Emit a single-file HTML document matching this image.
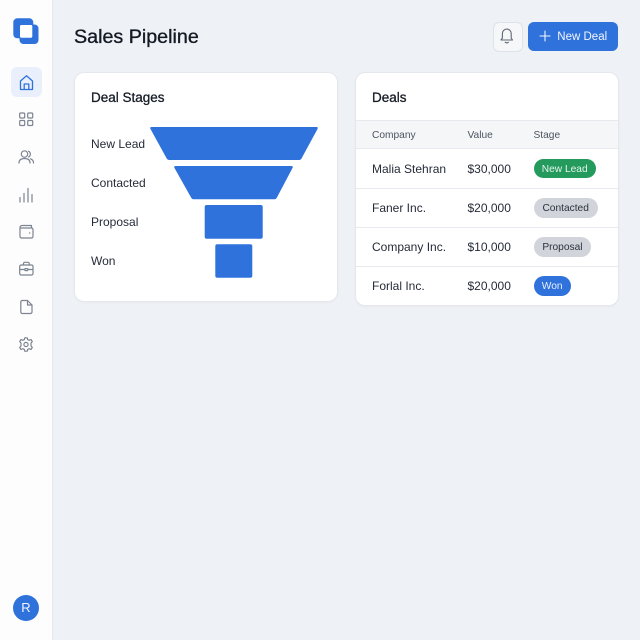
<!DOCTYPE html>
<html>
<head>
<meta charset="utf-8">
<style>
html,body{margin:0;padding:0;width:640px;height:640px;overflow:hidden}
body{background:#eef1f5;font-family:"Liberation Sans",sans-serif;color:#1f2733;position:relative}
.a{position:absolute;white-space:nowrap}
#side{left:0;top:0;width:52px;height:640px;background:#fdfdfe;border-right:1.5px solid #e4e7ec}
.card{background:#fff;border-radius:9px;box-shadow:0 0 0 1px #e4e7ec,0 1px 3px rgba(30,40,60,.06)}
.t{font-size:12px;line-height:16px;color:#252c38}
.l{font-size:12px;line-height:16px;color:#252c38}
.h{font-size:13.5px;line-height:18px;color:#161c26;-webkit-text-stroke:.3px #161c26}
.th{font-size:10.2px;line-height:14px;color:#4b5461}
.pill{height:19.6px;line-height:21.5px;border-radius:10px;font-size:10.2px;text-align:center}
.line{left:355.5px;width:262.5px;height:1px;background:#e6e9ee}
svg{position:absolute;left:0;top:0}
</style>
</head>
<body>
<div class="a" id="side"></div>
<div class="a" style="left:11px;top:67px;width:31px;height:30px;border-radius:6px;background:#e9f0fb"></div>

<div class="a" style="left:74px;top:23.5px;font-size:19.7px;line-height:26px;color:#141a24;-webkit-text-stroke:.35px #141a24">Sales Pipeline</div>

<div class="a" style="left:492.5px;top:21.5px;width:28px;height:28px;border:1px solid #dfe2e8;border-radius:6px;background:#f6f7f9"></div>
<div class="a" style="left:527.7px;top:21.5px;width:90.6px;height:29px;border-radius:6px;background:#2f72dc"></div>
<div class="a" style="left:557.3px;top:29px;font-size:11.5px;line-height:16px;color:#f2f6fd">New Deal</div>

<div class="a card" style="left:75px;top:73px;width:262px;height:228px"></div>
<div class="a h" style="left:91px;top:89px">Deal Stages</div>
<div class="a l" style="left:91px;top:136px">New Lead</div>
<div class="a l" style="left:91px;top:175px">Contacted</div>
<div class="a l" style="left:91px;top:214px">Proposal</div>
<div class="a l" style="left:91px;top:253px">Won</div>

<div class="a card" style="left:355.5px;top:73px;width:262.5px;height:232px;overflow:hidden">
  <div class="a" style="left:0;top:46.5px;width:263px;height:29.5px;background:#f5f6f8;border-top:1px solid #e6e9ee;border-bottom:1px solid #e6e9ee;box-sizing:border-box"></div>
</div>
<div class="a h" style="left:372px;top:89px">Deals</div>
<div class="a th" style="left:372px;top:128.5px">Company</div>
<div class="a th" style="left:467.5px;top:128.5px">Value</div>
<div class="a th" style="left:533.5px;top:128.5px">Stage</div>
<div class="a line" style="top:188px"></div>
<div class="a line" style="top:227px"></div>
<div class="a line" style="top:266px"></div>

<div class="a t" style="left:372px;top:161px">Malia Stehran</div>
<div class="a t" style="left:467.5px;top:161px">$30,000</div>
<div class="a pill" style="left:533.7px;top:158.7px;width:62px;background:#249a5d;color:#e4f5ec">New Lead</div>

<div class="a t" style="left:372px;top:200px">Faner Inc.</div>
<div class="a t" style="left:467.5px;top:200px">$20,000</div>
<div class="a pill" style="left:533.7px;top:198px;width:64px;background:#d1d4da;color:#2b323d">Contacted</div>

<div class="a t" style="left:372px;top:239px">Company Inc.</div>
<div class="a t" style="left:467.5px;top:239px">$10,000</div>
<div class="a pill" style="left:533.7px;top:237px;width:57.5px;background:#d1d4da;color:#2b323d">Proposal</div>

<div class="a t" style="left:372px;top:278px">Forlal Inc.</div>
<div class="a t" style="left:467.5px;top:278px">$20,000</div>
<div class="a pill" style="left:533.7px;top:276.3px;width:37px;background:#2f72dc;color:#e8f0fc">Won</div>

<div class="a" style="left:13px;top:595px;width:26px;height:26px;border-radius:50%;background:#2f72dc;color:#f2f6fd;font-size:13px;line-height:26px;text-align:center">R</div>

<svg width="640" height="640" viewBox="0 0 640 640" fill="none">
  <!-- logo -->
  <rect x="13.3" y="18.3" width="20" height="20" rx="4" fill="#2f72dc"/>
  <rect x="19.5" y="24.5" width="19" height="19.5" rx="4" fill="#2f72dc"/>
  <rect x="20" y="25" width="12.3" height="12.7" rx="1.5" fill="#fff"/>

  <!-- funnel -->
  <path d="M151.5 127H316.5Q318.5 127 317.5 129L301.5 158.5Q300.7 160 299 160H169Q167.5 160 166.7 158.5L150.5 129Q149.5 127 151.5 127Z" fill="#2f72dc"/>
  <path d="M175.5 166H291.5Q293.5 166 292.5 168L276.8 197.8Q276 199.3 274.5 199.3H193.5Q192 199.3 191.2 197.8L174.5 168Q173.5 166 175.5 166Z" fill="#2f72dc"/>
  <rect x="204.7" y="205" width="58" height="33.7" rx="2" fill="#2f72dc"/>
  <rect x="215.3" y="244.3" width="37" height="33.4" rx="2" fill="#2f72dc"/>

  <!-- plus -->
  <path d="M545 31V41M540 36H550" stroke="#f2f6fd" stroke-width="1.1" stroke-linecap="round"/>

  <!-- bell -->
  <path d="M501 40H512.5L511.2 38V33.5A4.4 4.4 0 0 0 502.4 33.5V38Z" stroke="#5f6773" stroke-width="1.1" stroke-linejoin="round"/>
  <path d="M505.2 42.2Q506.8 43.6 508.4 42.2" stroke="#5f6773" stroke-width="1.1" stroke-linecap="round"/>

  <!-- home -->
  <path d="M20.5 81L26.5 75.8L32.5 81V89.5H20.5Z" stroke="#2f72dc" stroke-width="1.3" stroke-linejoin="round"/>
  <path d="M24.2 89.5V84H28.8V89.5" stroke="#2f72dc" stroke-width="1.3" stroke-linejoin="round"/>

  <g stroke="#7c8490" stroke-width="1.2" stroke-linejoin="round" stroke-linecap="round">
    <!-- grid -->
    <rect x="19.7" y="113" width="5" height="5" rx="1"/>
    <rect x="27.7" y="113" width="5" height="5" rx="1"/>
    <rect x="19.7" y="120.5" width="5" height="5" rx="1"/>
    <rect x="27.7" y="120.5" width="5" height="5" rx="1"/>
    <!-- users -->
    <circle cx="24.5" cy="154" r="3.2"/>
    <path d="M19 163C19 159.5 21.5 158.5 24.5 158.5S30 159.5 30 163"/>
    <path d="M28.5 151.2A3.2 3.2 0 0 1 28.5 157M30.5 158.8C32.5 159.5 33.5 161 33.5 163"/>
    <!-- chart -->
    <path d="M20 202V197.5M24 202V193.5M28 202V188.5M32 202V194.5"/>
    <!-- wallet -->
    <path d="M22 225.5H31.5V228M20 227.5A2 2 0 0 1 22 225.5M20 227.5V236.5A1.5 1.5 0 0 0 21.5 238H31.5A1.5 1.5 0 0 0 33 236.5V229.5A1.5 1.5 0 0 0 31.5 228H20"/>
    <path d="M29.5 233H29.8"/>
    <!-- briefcase -->
    <rect x="19.7" y="265" width="13.3" height="10" rx="1.5"/>
    <path d="M23.5 265V263.5A1.3 1.3 0 0 1 24.8 262.3H27.9A1.3 1.3 0 0 1 29.2 263.5V265"/>
    <path d="M19.7 269.5H24.8M27.9 269.5H33"/>
    <rect x="24.8" y="268.6" width="3.1" height="2" rx=".6"/>
    <!-- file -->
    <path d="M22.3 300.5H27.5L32 305V312A1.5 1.5 0 0 1 30.5 313.5H22.3A1.5 1.5 0 0 1 20.8 312V302A1.5 1.5 0 0 1 22.3 300.5Z"/>
    <path d="M27.5 300.5V305H32"/>
    <!-- gear -->
    <circle cx="26" cy="344.5" r="2.1"/>
    <path d="M24.8 337.8H27.2L27.7 339.6L29.2 340.3L31 339.5L32.3 341.6L31 343V346L32.3 347.4L31 349.5L29.2 348.7L27.7 349.4L27.2 351.2H24.8L24.3 349.4L22.8 348.7L21 349.5L19.7 347.4L21 346V343L19.7 341.6L21 339.5L22.8 340.3L24.3 339.6Z"/>
  </g>
</svg>
</body>
</html>
